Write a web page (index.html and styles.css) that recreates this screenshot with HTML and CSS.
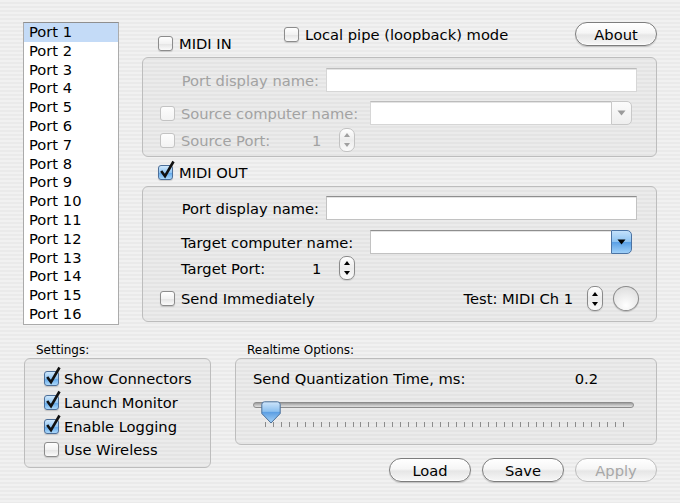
FILE: index.html
```html
<!DOCTYPE html>
<html>
<head>
<meta charset="utf-8">
<link rel="stylesheet" href="styles.css">
</head>
<body>
<div class="win">
  <div class="top">
    <ul class="ports">
      <li class="sel">Port 1</li><li>Port 2</li><li>Port 3</li><li>Port 4</li>
      <li>Port 5</li><li>Port 6</li><li>Port 7</li><li>Port 8</li>
      <li>Port 9</li><li>Port 10</li><li>Port 11</li><li>Port 12</li>
      <li>Port 13</li><li>Port 14</li><li>Port 15</li><li>Port 16</li>
    </ul>
    <div class="panel">
      <div class="hdr">
        <div class="chk hdr-in"><span class="cb"></span><span>MIDI IN</span></div>
        <div class="chk hdr-pipe"><span class="cb"></span><span>Local pipe (loopback) mode</span></div>
        <div class="btn about">About</div>
      </div>
      <div class="group g-in dis">
        <div class="row r1"><span class="lbl-r">Port display name:</span><span class="field"></span></div>
        <div class="row r2 pad-cb"><span class="cb"></span><span class="lbl w189">Source computer name:</span><span class="combo"><span class="cf"></span><span class="arr"><svg width="9" height="6" viewBox="0 0 9 6"><path d="M0.5 0.5 H8.5 L4.5 5.5 Z" fill="#9a9a9a"/></svg></span></span></div>
        <div class="row r3 pad-cb"><span class="cb"></span><span class="lbl w131">Source Port:</span><span class="val">1</span><span class="stepper"><svg width="16" height="24" viewBox="0 0 16 24"><path d="M5 9 H11 L8 5 Z" fill="#a0a0a0"/><path d="M5 15 H11 L8 19 Z" fill="#a0a0a0"/></svg></span></div>
      </div>
      <div class="outhdr">
        <div class="chk"><span class="cb on"><svg class="tick" width="18" height="20" viewBox="0 0 18 20"><path d="M3.2 11 L7 16.2 L15.5 1.5" fill="none" stroke="#111" stroke-width="2.6" stroke-linejoin="miter"/></svg></span><span>MIDI OUT</span></div>
      </div>
      <div class="group g-out">
        <div class="row o1"><span class="lbl-r">Port display name:</span><span class="field"></span></div>
        <div class="row o2 pad-lbl"><span class="lbl w189">Target computer name:</span><span class="combo"><span class="cf"></span><span class="arr blue"><svg width="9" height="6" viewBox="0 0 9 6"><path d="M0.5 0.5 H8.5 L4.5 5.5 Z" fill="#000"/></svg></span></span></div>
        <div class="row o3 pad-lbl"><span class="lbl w131">Target Port:</span><span class="val">1</span><span class="stepper"><svg width="16" height="24" viewBox="0 0 16 24"><path d="M5 9 H11 L8 5 Z" fill="#000"/><path d="M5 15 H11 L8 19 Z" fill="#000"/></svg></span></div>
        <div class="row o4 pad-cb"><span class="cb"></span><span class="lbl">Send Immediately</span><span class="test">Test: MIDI Ch 1</span><span class="stepper st2"><svg width="16" height="24" viewBox="0 0 16 24"><path d="M5 9 H11 L8 5 Z" fill="#000"/><path d="M5 15 H11 L8 19 Z" fill="#000"/></svg></span><span class="round"></span></div>
      </div>
    </div>
  </div>
  <div class="bottom">
    <div class="col-set">
      <div class="cap">Settings:</div>
      <div class="gbox set-box">
        <div class="chk"><span class="cb on"><svg class="tick" width="18" height="20" viewBox="0 0 18 20"><path d="M3.2 11 L7 16.2 L15.5 1.5" fill="none" stroke="#111" stroke-width="2.6"/></svg></span><span>Show Connectors</span></div>
        <div class="chk"><span class="cb on"><svg class="tick" width="18" height="20" viewBox="0 0 18 20"><path d="M3.2 11 L7 16.2 L15.5 1.5" fill="none" stroke="#111" stroke-width="2.6"/></svg></span><span>Launch Monitor</span></div>
        <div class="chk"><span class="cb on"><svg class="tick" width="18" height="20" viewBox="0 0 18 20"><path d="M3.2 11 L7 16.2 L15.5 1.5" fill="none" stroke="#111" stroke-width="2.6"/></svg></span><span>Enable Logging</span></div>
        <div class="chk"><span class="cb"></span><span>Use Wireless</span></div>
      </div>
    </div>
    <div class="col-rt">
      <div class="cap">Realtime Options:</div>
      <div class="gbox rt-box">
        <div class="rt-row"><span>Send Quantization Time, ms:</span><span class="rt-val">0.2</span></div>
        <div class="slider">
          <div class="track"></div>
          <svg class="thumb" width="20" height="23" viewBox="0 0 20 23">
            <defs><linearGradient id="tg" x1="0" y1="0" x2="0" y2="1"><stop offset="0" stop-color="#cfe6fb"/><stop offset="0.45" stop-color="#8cc0ef"/><stop offset="0.5" stop-color="#5c9fe3"/><stop offset="1" stop-color="#a7d3f7"/></linearGradient></defs>
            <path d="M3.5 0.8 H16.5 Q19.2 0.8 19.2 3.5 V12.5 L10 22 L0.8 12.5 V3.5 Q0.8 0.8 3.5 0.8 Z" fill="url(#tg)" stroke="#4b6f98" stroke-width="1"/>
          </svg>
          <div class="ticks"></div>
        </div>
      </div>
      <div class="btns">
        <div class="btn">Load</div>
        <div class="btn">Save</div>
        <div class="btn disabled">Apply</div>
      </div>
    </div>
  </div>
</div>
</body>
</html>
```
FILE: styles.css
```css
* { box-sizing: border-box; }
html, body { margin: 0; padding: 0; }
body {
  width: 680px;
  height: 503px;
  overflow: hidden;
  font-family: "DejaVu Sans", "Liberation Sans", sans-serif;
  font-size: 14.7px;
  line-height: 17px;
  color: #000;
  background: repeating-linear-gradient(to bottom, #f1f1f1 0, #f1f1f1 2px, #eaeaea 2px, #eaeaea 4px);
}
.win { padding: 22px 23px 0 23px; }
.top { display: flex; align-items: flex-start; }

.ports {
  list-style: none;
  margin: 0;
  padding: 0;
  width: 96px;
  height: 303px;
  background: #fff;
  border: 1px solid #ababab;
  border-top-color: #8f8f8f;
}
.ports li { height: 18.8px; line-height: 18.8px; padding-left: 5px; }
.ports li.sel { background: #c4dbf7; }

.panel { margin-left: 23px; width: 515px; }

.chk { display: flex; align-items: center; height: 17px; gap: 6px; white-space: nowrap; }
.cb {
  position: relative;
  flex: none;
  width: 15px;
  height: 15px;
  border: 1px solid #8c8c8c;
  border-radius: 3px;
  background: linear-gradient(#ffffff, #f2f2f2 50%, #e3e3e3 51%, #fbfbfb);
  box-shadow: 0 1px 1px rgba(0,0,0,0.15);
}
.cb.on {
  border-color: #4d6f99;
  background: linear-gradient(#cfe8fc, #93c6f3 50%, #5ea6ea 51%, #acd8fa);
}
.cb .tick { position: absolute; left: -1px; top: -6px; overflow: visible; }

.hdr { display: flex; align-items: flex-start; height: 35px; }
.hdr-in { margin-left: 16px; margin-top: 13px; width: 126px; }
.hdr-pipe { margin-top: 4px; }
.about { margin-left: auto; }

.btn {
  width: 82px;
  height: 24px;
  border: 1px solid #7d7d7d;
  border-radius: 12px;
  background: linear-gradient(#ffffff, #f6f6f6 45%, #e6e6e6 55%, #f7f7f7);
  box-shadow: 0 1px 1px rgba(0,0,0,0.18), inset 0 -1px 1px rgba(255,255,255,0.8);
  display: flex;
  align-items: center;
  justify-content: center;
}
.btn.disabled { color: #a7a7a7; border-color: #bdbdbd; box-shadow: none; }

.group, .gbox {
  border: 1px solid #bdbdbd;
  border-radius: 6px;
  background: rgba(0,0,0,0.025);
}
.g-in { height: 100px; padding-top: 10px; }
.row { display: flex; align-items: center; height: 24px; }
.g-in .r2 { margin-top: 9px; }
.g-in .r3 { margin-top: 3px; }
.dis .lbl, .dis .lbl-r, .dis .val { color: #a2a2a2; }
.dis .cb { border-color: #c3c3c3; box-shadow: none; background: linear-gradient(#fdfdfd, #f3f3f3); }
.dis .field { border-color: #d6d6d6; border-top-color: #bcbcbc; }
.dis .combo .cf { border-color: #d6d6d6; border-top-color: #bcbcbc; }
.dis .combo .arr { border-color: #c8c8c8; background: linear-gradient(#fbfbfb, #eeeeee); }
.dis .stepper { border-color: #c2c2c2; box-shadow: none; }

.lbl-r { width: 176px; text-align: right; white-space: nowrap; }
.lbl { white-space: nowrap; }
.w189 { width: 189px; flex: none; }
.w131 { width: 131px; flex: none; }
.val { width: 27px; flex: none; }
.field {
  margin-left: 7px;
  width: 311px;
  height: 24px;
  background: #fff;
  border: 1px solid #c2c2c2;
  border-top-color: #8e8e8e;
  box-shadow: inset 0 1px 0 #e4e4e4;
}
.pad-cb { padding-left: 17px; }
.pad-cb .cb { margin-right: 6px; }
.pad-lbl { padding-left: 38px; }

.combo { display: flex; width: 262px; height: 24px; }
.combo .cf {
  flex: 1;
  background: #fff;
  border: 1px solid #c2c2c2;
  border-top-color: #8e8e8e;
  border-right: none;
  box-shadow: inset 0 1px 0 #e4e4e4;
}
.combo .arr {
  width: 21px;
  height: 24px;
  border: 1px solid #8b8b8b;
  border-radius: 0 5px 5px 0;
  display: flex;
  align-items: center;
  justify-content: center;
}
.combo .arr.blue {
  border-color: #4b73a3;
  background: linear-gradient(#c3e1fb, #8fc4f2 48%, #5aa0e6 52%, #9fd0f8);
}

.stepper {
  flex: none;
  width: 16px;
  height: 24px;
  border: 1px solid #8a8a8a;
  border-radius: 7px;
  background: linear-gradient(#ffffff, #ececec 50%, #fafafa);
  box-shadow: 0 1px 1px rgba(0,0,0,0.12);
  display: flex;
  align-items: center;
  justify-content: center;
  overflow: hidden;
}
.stepper svg { flex: none; }

.outhdr { height: 29px; padding-top: 7px; padding-left: 16px; }

.g-out { height: 136px; padding-top: 9px; }
.g-out .o2 { margin-top: 10px; }
.g-out .o3 { margin-top: 2px; }
.g-out .o4 { margin-top: 6px; height: 25px; padding-right: 17px; }
.test { margin-left: auto; margin-right: 14px; white-space: nowrap; }
.st2 { margin-right: 10px; height: 25px; }
.round {
  flex: none;
  width: 26px;
  height: 25px;
  border-radius: 50%;
  border: 1px solid #8a8a8a;
  background: radial-gradient(circle at 50% 80%, #ffffff, #eeeeee 45%, #d8d8d8);
  box-shadow: 0 1px 1px rgba(0,0,0,0.18);
}

.bottom { display: flex; align-items: flex-start; margin-top: 18px; padding-left: 1px; }
.cap { font-size: 12px; line-height: 14px; height: 15px; padding-left: 12px; }
.col-set { width: 187px; flex: none; }
.set-box {
  height: 110px;
  padding: 11px 0 0 19px;
  display: flex;
  flex-direction: column;
  gap: 6.8px;
}
.set-box .chk { gap: 5px; }
.col-rt { width: 422px; margin-left: 24px; flex: none; }
.rt-box { height: 87px; padding: 11px 0 0 17px; }
.rt-row { display: flex; height: 17px; padding-right: 58px; }
.rt-val { margin-left: auto; }
.slider { position: relative; width: 381px; height: 30px; margin-top: 15px; }
.track {
  margin-top: 5px;
  height: 6px;
  border-radius: 3px;
  border: 1px solid #8d8d8d;
  background: linear-gradient(#9c9c9c, #c9c9c9 60%, #e0e0e0);
}
.thumb { position: absolute; left: 8px; top: -1px; }
.ticks {
  margin-top: 14px;
  margin-left: 12px;
  width: 359px;
  height: 5px;
  background: repeating-linear-gradient(to right, #8c8c8c 0, #8c8c8c 1px, transparent 1px, transparent 7.956px);
}
.btns { display: flex; justify-content: flex-end; gap: 11px; margin-top: 13px; }
```
